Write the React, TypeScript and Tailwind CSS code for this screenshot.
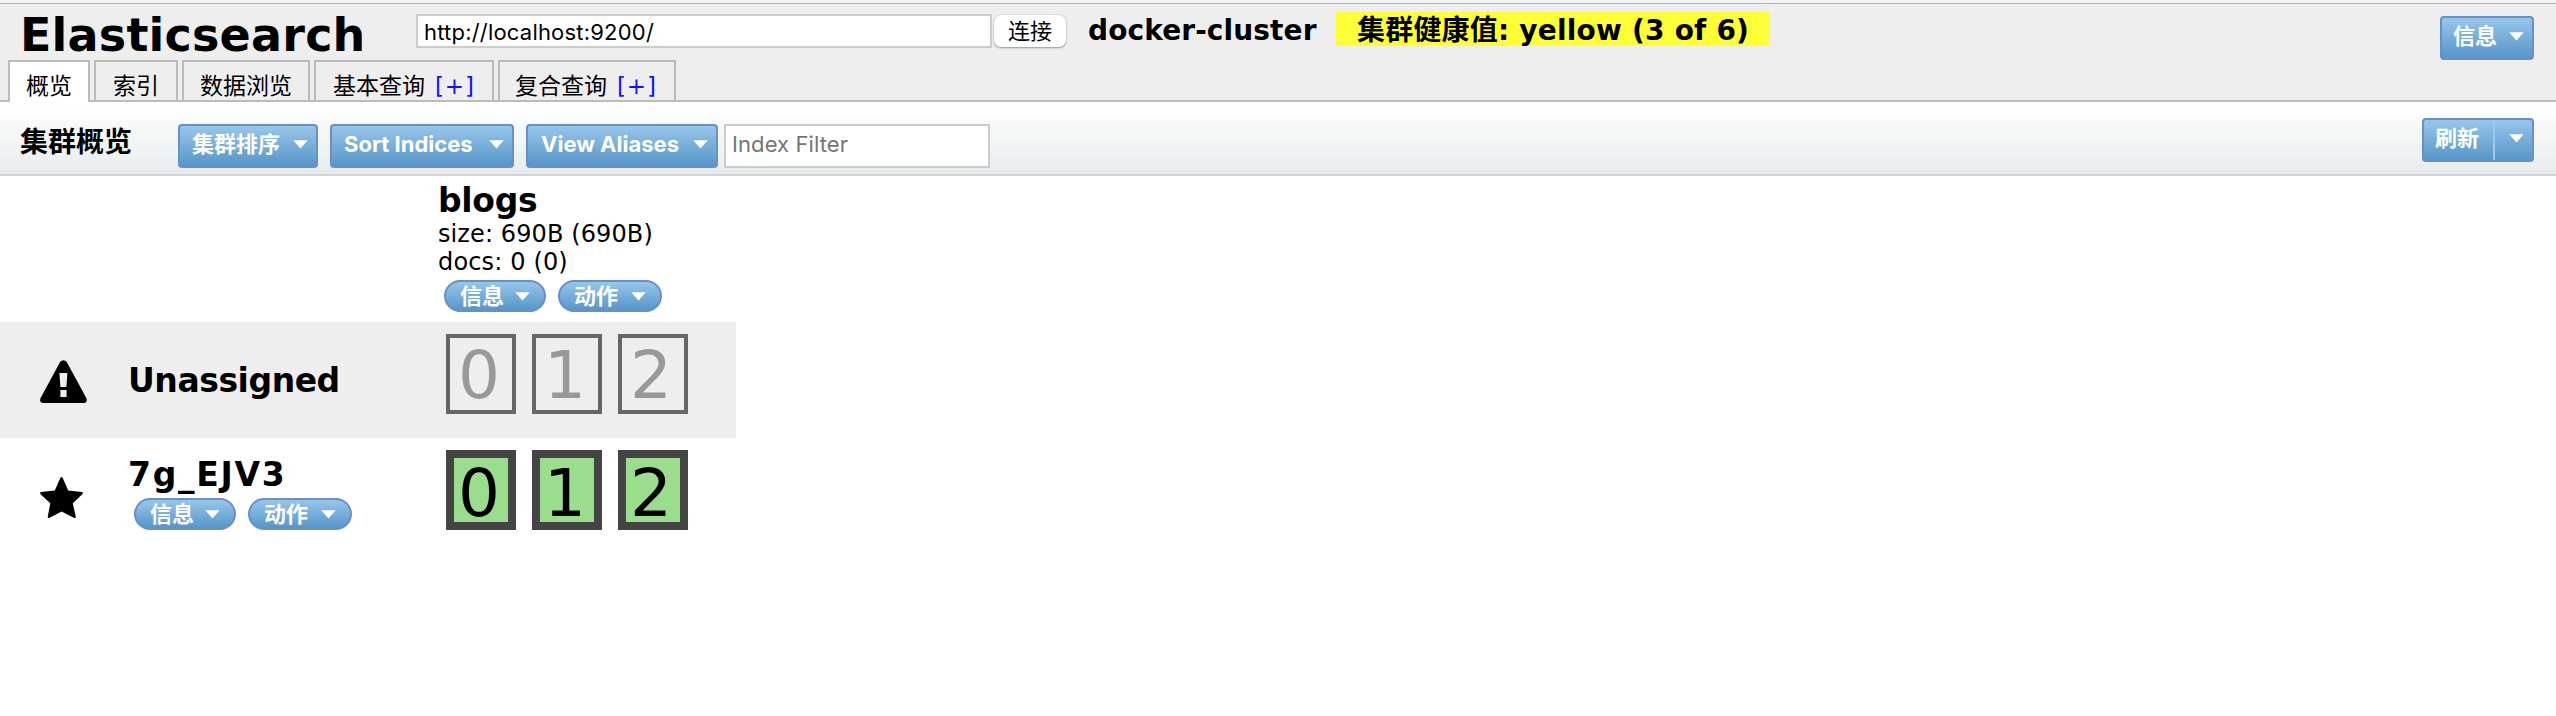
import React from "react";

const VERDANA = "font-['DejaVu_Sans','Noto_Sans_CJK_SC',sans-serif]";
const UI = "font-['Inter','Noto_Sans_CJK_SC',sans-serif]";

const BLUE =
  "flex items-center border-2 border-[#688fca] bg-linear-to-b from-[#98c6ea] to-[#5696c8] font-bold text-white whitespace-nowrap";

function Caret() {
  return (
    <svg width="15" height="9" viewBox="0 0 15 9" className="shrink-0">
      <path d="M0.3 0.3H14.7L7.5 8.6Z" fill="#fff" />
    </svg>
  );
}

function MenuButton({ label, size }: { label: string; size: string }) {
  return (
    <button className={`${BLUE} ${UI} ${size} h-11 justify-between rounded-[4px] pb-[4px] text-[22px]`}>
      <span className="leading-9">{label}</span>
      <Caret />
    </button>
  );
}

function Pill({ label, size }: { label: string; size: string }) {
  return (
    <button className={`${BLUE} ${UI} ${size} h-8 justify-between rounded-full pr-[14px] pl-[14px] text-[22px]`}>
      <span className="leading-7">{label}</span>
      <Caret />
    </button>
  );
}

function Pills() {
  return (
    <div className="flex gap-3">
      <Pill label="信息" size="w-[102px]" />
      <Pill label="动作" size="w-[104px]" />
    </div>
  );
}

function Tab({ label, size, plus }: { label: string; size: string; plus?: boolean }) {
  return (
    <div className={`${size} h-10 border-2 border-b-0 border-[#bbb] pt-[6px] text-[23px] leading-9 whitespace-nowrap`}>
      {label}
      {plus && <span className="ml-[10px] tracking-[0.9px] text-[#11f]">[+]</span>}
    </div>
  );
}

function Shards({ assigned }: { assigned?: boolean }) {
  return (
    <div className="flex gap-4">
      {["0", "1", "2"].map((n) => (
        <div
          key={n}
          className={
            assigned
              ? "flex h-20 w-[70px] items-center justify-center border-8 border-[#444] bg-[#9add8c] pr-[4px] pt-[7px] text-[66px] leading-none text-black"
              : "flex h-20 w-[70px] items-center justify-center border-4 border-[#666] pr-[4px] pt-[3px] text-[66px] leading-none text-[#999]"
          }
        >
          {n}
        </div>
      ))}
    </div>
  );
}

export default function App() {
  return (
    <div className={`${VERDANA} h-[716px] w-[2556px] overflow-hidden bg-white text-black`}>
      <header className="flex h-[102px] flex-col border-b-2 border-[#bbb] bg-[#eee]">
        <div className="h-1 shrink-0 border-b border-[#b0b0b0] bg-[#f3f3f3]" />
        <div className="flex h-14 shrink-0 items-start pr-[22px] pl-[20px]">
          <h1 className="mt-[3px] w-[396px] text-[46px] leading-[56px] font-bold tracking-[0.2px]">Elasticsearch</h1>
          <div className={`${UI} mt-[10px] h-[34px] w-[576px] border-2 border-[#ccc] bg-white pl-[6px] text-[22px] leading-[32px] tracking-[0.2px]`}>
            http://localhost:9200/
          </div>
          <button className={`${UI} mt-[11px] ml-[2px] h-8 w-[72px] rounded-[7px] bg-white text-[22px] leading-8 shadow-[0_0_1px_#999,0_1px_2px_#999]`}>
            连接
          </button>
          <div className="mt-2 ml-[22px] w-[248px] pt-[2px] text-[28px] leading-[34px] font-bold tracking-[0.1px] whitespace-nowrap">
            docker-cluster
          </div>
          <div className="mt-2 h-[34px] w-[434px] bg-[#ffff37] pt-[2px] pl-[21px] text-[28px] leading-[34px] font-bold tracking-[0.2px] whitespace-nowrap">
            集群健康值: yellow (3 of 6)
          </div>
          <div className="mt-3 ml-auto">
            <MenuButton label="信息" size="w-[94px] pl-[11px] pr-[8px]" />
          </div>
        </div>
        <nav className="flex h-10 shrink-0 gap-1 pl-2">
          <div className="h-[42px] w-[82px] shrink-0 rounded-b-[2px] border-2 border-b-0 border-[#bbb] bg-white pt-[6px] pl-4 text-[23px] leading-9 whitespace-nowrap">
            概览
          </div>
          <Tab label="索引" size="w-[84px] pl-[17px]" />
          <Tab label="数据浏览" size="w-[128px] pl-[16px]" />
          <Tab label="基本查询" size="w-[180px] pl-[17px]" plus />
          <Tab label="复合查询" size="w-[178px] pl-[15px]" plus />
        </nav>
      </header>

      <div className="flex h-[74px] items-start border-b-2 border-[#d2d6d9] bg-linear-to-b from-white to-[#e8ecee] pr-[22px] pl-[20px]">
        <h2 className="mt-[23px] w-[158px] text-[28px] leading-9 font-bold">集群概览</h2>
        <div className="mt-[22px] flex">
          <MenuButton label="集群排序" size="w-[140px] pl-[12px] pr-[8px]" />
          <div className="w-3" />
          <MenuButton label="Sort Indices" size="w-[184px] pl-[12px] pr-[8px]" />
          <div className="w-3" />
          <MenuButton label="View Aliases" size="w-[192px] pl-[13px] pr-[8px]" />
          <div className={`${UI} ml-[6px] h-11 w-[266px] border-2 border-[#ccc] bg-white pl-[6px] text-[22px] leading-[37px] tracking-[0.1px] text-[#757575]`}>
            Index Filter
          </div>
        </div>
        <div className="mt-4 ml-auto flex">
          <button className={`${BLUE} ${UI} h-11 w-[71px] rounded-l-[4px] border-r-0 pb-[4px] pl-[11px] text-[22px]`}>
            <span className="leading-9">刷新</span>
          </button>
          <button className={`${BLUE} h-11 w-[41px] justify-end rounded-r-[4px] border-l-0 pr-2`}>
            <span className="mr-auto h-10 w-[2px] bg-[#9cc9ec]" />
            <span className="pb-[4px]">
              <Caret />
            </span>
          </button>
        </div>
      </div>

      <section className="w-[736px]">
        <div className="h-[146px] pt-[5px] pl-[438px]">
          <div className="text-[33px] leading-10 font-bold tracking-[-0.3px]">blogs</div>
          <div className="-mt-px text-[24px] leading-7 tracking-[0.1px]">size: 690B (690B)</div>
          <div className="text-[24px] leading-7 tracking-[0.15px]">docs: 0 (0)</div>
          <div className="mt-1 ml-[6px]">
            <Pills />
          </div>
        </div>
        <div className="flex h-[116px] bg-[#eee]">
          <div className="w-32 pt-[38px] pl-10">
            <svg width="47" height="43" viewBox="0 0 47 43">
              <path
                fillRule="evenodd"
                d="M20.2 1.8Q23.4-1.3 26.6 1.8L46.3 38Q48 42.6 43.6 43H3.3Q-1.2 42.6.6 38ZM19.4 13L20.4 27H26.4L27.4 13ZM20.4 30V37H26.6V30Z"
              />
            </svg>
          </div>
          <div className="w-[318px] pt-[39px] text-[33px] leading-10 font-bold tracking-[-0.45px]">Unassigned</div>
          <div className="pt-3">
            <Shards />
          </div>
        </div>
        <div className="flex h-[116px]">
          <div className="w-32 pt-[39px] pl-10">
            <svg width="43" height="41" viewBox="0 0 43 41">
              <path d="M21.5 0Q22.3 0 22.8 1.2L28.2 13.5 41.8 15Q43.9 15.6 42.3 17.2L32.8 26.3 35.7 39.5Q35.8 41.8 33.8 40.8L21.6 34.5 9.7 40.8Q7.5 41.8 7.8 39.5L10.3 26.3.6 17.2Q-.8 15.6 1.2 15L14.8 13.5 20.2 1.2Q20.7 0 21.5 0Z" />
            </svg>
          </div>
          <div className="w-[318px] pt-[17px]">
            <div className="text-[33px] leading-10 font-bold tracking-[1.7px]">7g_EJV3</div>
            <div className="mt-[3px] ml-[6px]">
              <Pills />
            </div>
          </div>
          <div className="pt-3">
            <Shards assigned />
          </div>
        </div>
      </section>
    </div>
  );
}
